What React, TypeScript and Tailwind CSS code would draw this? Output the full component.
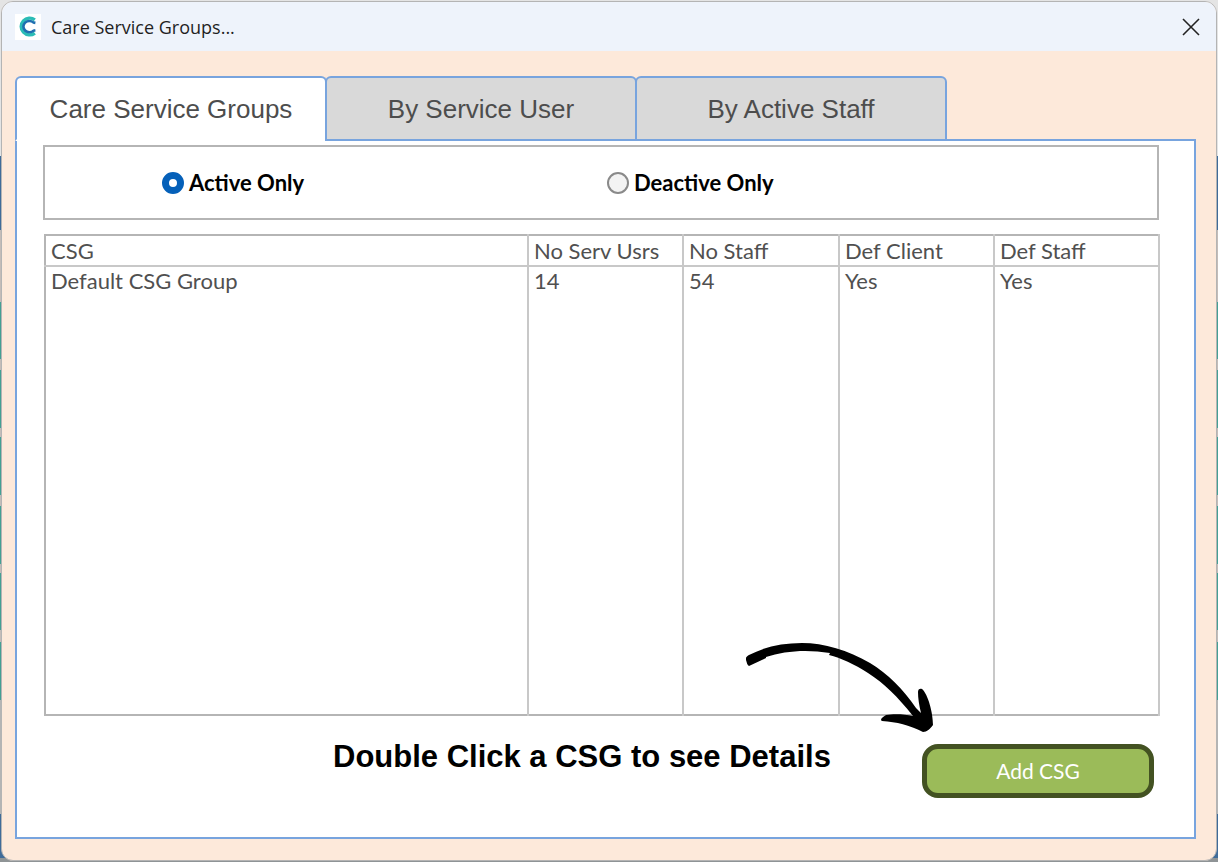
import { useState } from "react";

const tabs = ["Care Service Groups", "By Service User", "By Active Staff"];
const columns = ["CSG", "No Serv Usrs", "No Staff", "Def Client", "Def Staff"];
const rows = [["Default CSG Group", "14", "54", "Yes", "Yes"]];
const filters = [
  { id: "active", label: "Active Only" },
  { id: "deactive", label: "Deactive Only" },
];

function Logo() {
  return (
    <svg viewBox="0 0 26 26" className="size-[26px]" aria-hidden="true">
      <rect width="26" height="26" fill="#fff" />
      <path d="M19.8 5.9A8.4 8.4 0 1 0 19.8 19.1" fill="none" stroke="#2bbcb6" strokeWidth="3.4" />
      <path d="M20.4 8.9L18.6 8.6A6 5.6 0 1 0 18.6 16.6L20.4 16.3" fill="none" stroke="#1f6fb0" strokeWidth="2.6" />
    </svg>
  );
}

function CurvedArrow() {
  return (
    <svg
      viewBox="0 0 192 94"
      className="pointer-events-none absolute right-[256px] bottom-[100px] w-[192px]"
      aria-hidden="true"
    >
      <path
        d="M0 17C-1 15 1 13 3 12C18 4 36 0 56 0C78 0 102 7 124 20C142 31 157 46 170 65L175 70C173 62 172 55 172 49C172 46 174 45 176 46C182 51 187 70 187 82C184 86 181 89 177 89C163 82 151 79 136 78C134 77 135 75 140 72C147 71 158 71 167 73C151 53 139 41 122 30C108 21 95 15 83 12L84 10C60 6 38 8 20 14L20 15L3 23C1 22 1 20 0 17Z"
        fill="#000"
      />
    </svg>
  );
}

export default function App() {
  const [active, setActive] = useState(0);
  const [filter, setFilter] = useState("active");

  return (
    <div className="flex min-h-screen border-r border-b border-white bg-[linear-gradient(to_bottom,#e4e4e4_0_156px,#3f6b99_156px_230px,#c4bcb8_230px_302px,#44a093_302px_359px,#c4bcb8_359px_370px,#44a093_370px_428px,#c4bcb8_428px_437px,#44a093_437px_495px,#c4bcb8_495px_506px,#44a093_506px_564px,#c4bcb8_564px_573px,#44a093_573px_630px,#c4bcb8_630px_642px,#44a093_642px_700px,#b4b4b4_700px_814px,#3f6b99_814px_858px,#8f9496_858px)] px-px pt-px pb-px font-['Lato','Noto_Sans',sans-serif]">
      <main className="flex flex-1 flex-col overflow-hidden rounded-xl border border-[#b4b4b4] bg-[#fde9da]">
        <header className="flex h-[49px] items-center bg-[#eef3fb] pr-2 pl-[13px]">
          <Logo />
          <h1 className="ml-[10px] flex-1 font-['Open_Sans',sans-serif] text-lg text-[#1f1f1f]">
            Care Service Groups...
          </h1>
          <button type="button" aria-label="Close" className="p-1 pr-2">
            <svg viewBox="0 0 18 18" className="size-[18px]" aria-hidden="true">
              <path d="M1 1L17 17M17 1L1 17" stroke="#222" strokeWidth="1.6" />
            </svg>
          </button>
        </header>

        <div className="flex flex-1 flex-col pt-[25px] pr-5 pb-[21px] pl-[13px]">
          <div role="tablist" className="relative z-10 -mb-[2px] flex font-['Liberation_Sans',sans-serif]">
            {tabs.map((tab, i) => (
              <button
                key={tab}
                type="button"
                role="tab"
                aria-selected={active === i}
                onClick={() => setActive(i)}
                className={`-mr-[2px] h-[65px] w-[312px] rounded-t-md border-2 border-[#78a4de] pt-[2px] text-[26px] text-[#4d4d4d] ${
                  active === i ? "border-b-white bg-white" : "bg-[#d9d9d9]"
                }`}
              >
                {tab}
              </button>
            ))}
          </div>

          <section className="relative flex flex-1 flex-col border-2 border-[#78a4de] bg-white pt-1 pr-[34px] pb-[39px] pl-[26px]">
            <div
              role="radiogroup"
              aria-label="Show groups"
              className="mr-px flex h-[75px] border-2 border-[#b5b5b5] pl-[117px] text-[22px] font-bold text-black"
            >
              {filters.map((o) => (
                <label key={o.id} className="flex w-[445px] items-center gap-[5px]">
                  <input
                    type="radio"
                    name="filter"
                    checked={filter === o.id}
                    onChange={() => setFilter(o.id)}
                    className="size-[22px] appearance-none rounded-full border-2 border-[#8a8a8a] bg-[#f3f3f3] checked:border-[7px] checked:border-[#0560b9] checked:bg-white"
                  />
                  {o.label}
                </label>
              ))}
            </div>

            <div className="mt-[14px] ml-px flex flex-1">
              <table className="w-full table-fixed border-2 border-[#b5b5b5] text-left text-[22px] text-[#505050]">
                <colgroup>
                  <col />
                  <col className="w-[155px]" />
                  <col className="w-[156px]" />
                  <col className="w-[155px]" />
                  <col className="w-[165px]" />
                </colgroup>
                <thead>
                  <tr className="h-[31px]">
                    {columns.map((c) => (
                      <th key={c} className="border-r-2 border-b-2 border-[#c8c8c8] px-[5px] pb-px font-normal leading-[27px]">
                        {c}
                      </th>
                    ))}
                  </tr>
                </thead>
                <tbody>
                  {rows.map((r) => (
                    <tr key={r[0]}>
                      {r.map((v, i) => (
                        <td key={i} className="border-r-2 border-[#c8c8c8] px-[5px] align-top leading-7">
                          {v}
                        </td>
                      ))}
                    </tr>
                  ))}
                </tbody>
              </table>
            </div>

            <footer className="mt-7 flex items-start pr-[6px]">
              <p className="flex-1 pl-[290px] font-['Liberation_Sans',sans-serif] text-[31px] leading-[26px] font-bold text-black">
                Double Click a CSG to see Details
              </p>
              <button
                type="button"
                className="h-[54px] w-[232px] rounded-2xl border-[5px] border-[#435222] bg-[#9bbb59] text-[21px] text-white"
              >
                Add CSG
              </button>
            </footer>
            <CurvedArrow />
          </section>
        </div>
      </main>
    </div>
  );
}
